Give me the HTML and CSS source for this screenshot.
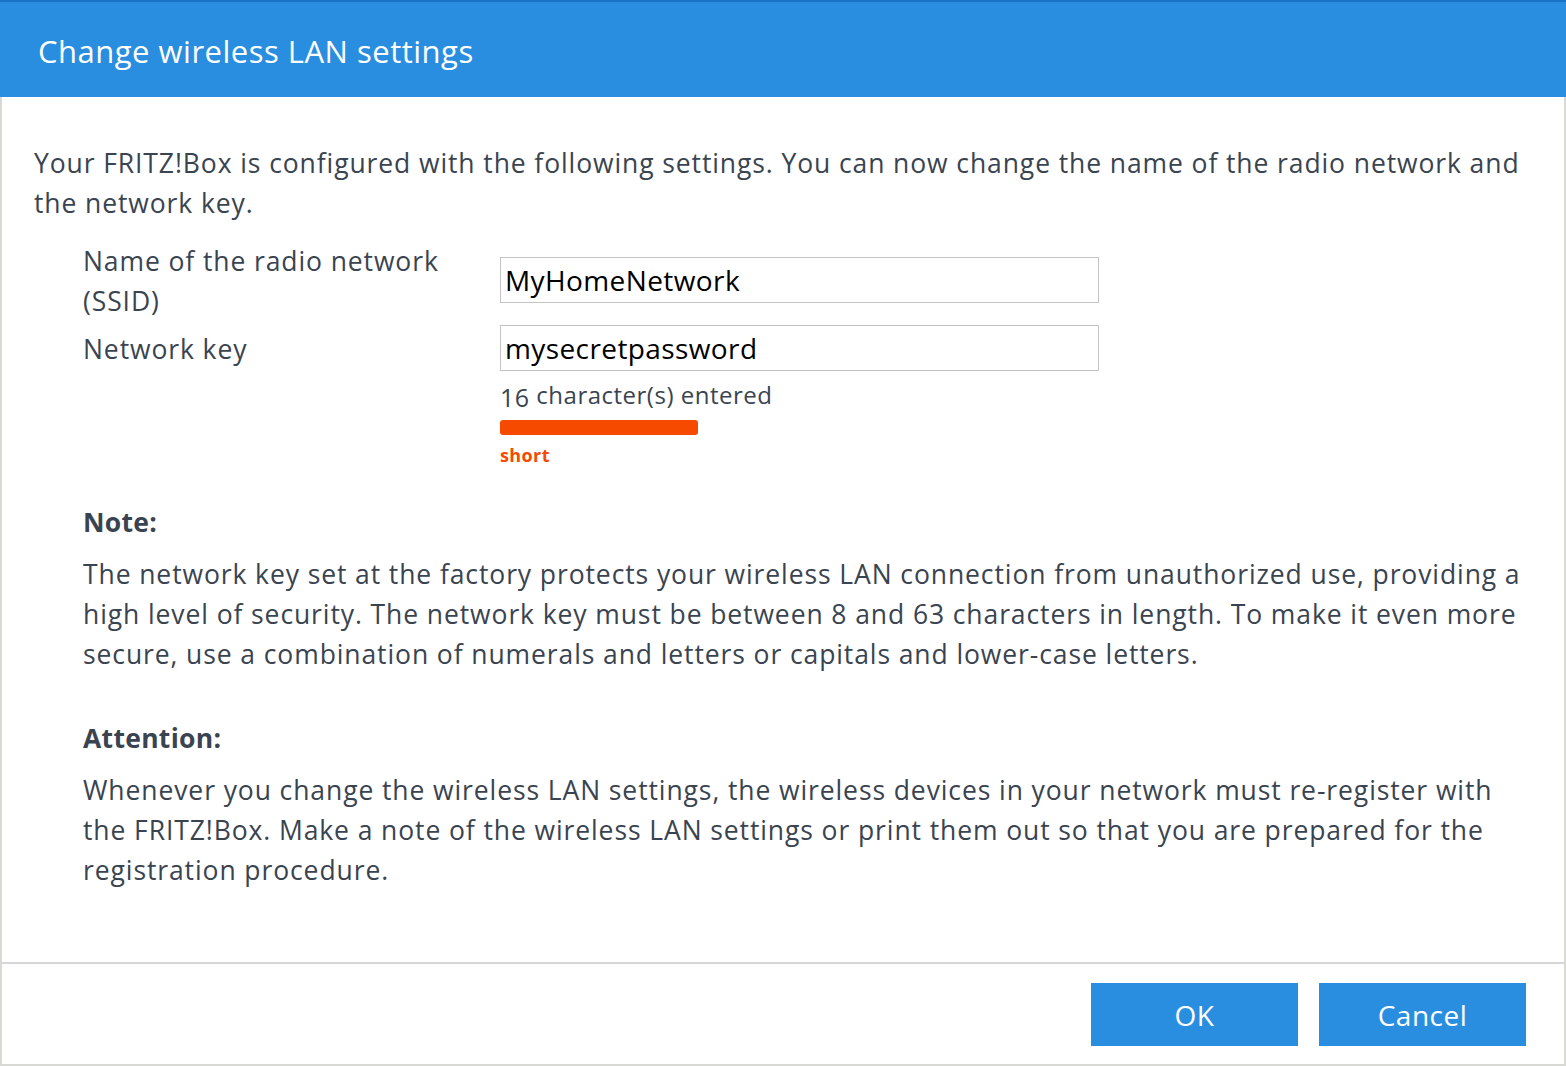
FILE: index.html
```html
<!DOCTYPE html>
<html lang="en">
<head>
<meta charset="utf-8">
<title>Change wireless LAN settings</title>
<link rel="stylesheet" href="styles.css">
</head>
<body>
<div class="dialog">
  <header class="dialog-header">
    <h1 class="dialog-title">Change wireless LAN settings</h1>
  </header>
  <main class="dialog-body">
    <p class="intro">Your FRITZ!Box is configured with the following settings. You can now change the name of the radio network and the network key.</p>
    <div class="form">
      <label class="form-label" for="ssid">Name of the radio network (SSID)</label>
      <div class="form-field first">
        <input class="text-input" id="ssid" type="text" value="MyHomeNetwork">
      </div>
      <label class="form-label second" for="key">Network key</label>
      <div class="form-field">
        <input class="text-input" id="key" type="text" value="mysecretpassword">
        <div class="char-count"><span class="count-num">16</span> character(s) entered</div>
        <div class="strength-bar"></div>
        <div class="strength-label">short</div>
      </div>
    </div>
    <section class="notice">
      <h2 class="notice-title">Note:</h2>
      <p class="notice-text">The network key set at the factory protects your wireless LAN connection from unauthorized use, providing a high level of security. The network key must be between 8 and 63 characters in length. To make it even more secure, use a combination of numerals and letters or capitals and lower-case letters.</p>
    </section>
    <section class="notice attention">
      <h2 class="notice-title">Attention:</h2>
      <p class="notice-text">Whenever you change the wireless LAN settings, the wireless devices in your network must re-register with the FRITZ!Box. Make a note of the wireless LAN settings or print them out so that you are prepared for the registration procedure.</p>
    </section>
  </main>
  <footer class="dialog-footer">
    <button class="btn" type="button">OK</button>
    <button class="btn" type="button">Cancel</button>
  </footer>
</div>
</body>
</html>
```
FILE: styles.css
```css
html, body {
  margin: 0;
  padding: 0;
  height: 100%;
}
body {
  font-family: "Open Sans", "Noto Sans", sans-serif;
  color: #3a4450;
  background: #ffffff;
}
.dialog {
  height: 100vh;
  display: flex;
  flex-direction: column;
  box-sizing: border-box;
}
.dialog-header {
  background: #2a8ee0;
  border-top: 2px solid #1a72c6;
  height: 97px;
  box-sizing: border-box;
  display: flex;
  align-items: center;
  padding-left: 38px;
  flex: none;
}
.dialog-title {
  margin: 0;
  color: #ffffff;
  font-weight: 400;
  font-size: 31px;
  letter-spacing: 0.5px;
  line-height: 40px;
  padding-top: 3px;
}
.dialog-body {
  flex: 1;
  border-left: 2px solid #d8d8d4;
  border-right: 2px solid #d8d8d4;
  padding: 46px 36px 0 32px;
}
.intro {
  margin: 0;
  font-size: 26.5px;
  letter-spacing: 0.9px;
  line-height: 40px;
}
.form {
  display: grid;
  grid-template-columns: 417px 600px;
  margin: 18px 0 0 49px;
  row-gap: 4px;
  font-size: 26.5px;
  letter-spacing: 0.9px;
  line-height: 40px;
}
.form-label {
  display: block;
  padding-right: 40px;
}
.form-label.second {
  padding-top: 4px;
}
.form-field.first {
  padding-top: 16px;
}
.text-input {
  display: block;
  width: 599px;
  height: 46px;
  box-sizing: border-box;
  border: 1px solid #c4c4c4;
  padding: 0 4px;
  margin: 0;
  font-family: "Open Sans", "Noto Sans", sans-serif;
  font-size: 28px;
  letter-spacing: 0.4px;
  color: #000000;
  background: #ffffff;
  outline: none;
}
.char-count {
  margin-top: 4px;
  font-size: 24px;
  letter-spacing: 0.5px;
  line-height: 40px;
}
.count-num {
  font-size: 25px;
  vertical-align: -3px;
}
.strength-bar {
  margin-top: 3px;
  width: 198px;
  height: 15px;
  border-radius: 3px;
  background: #f54a00;
}
.strength-label {
  margin-top: 8px;
  font-size: 18px;
  letter-spacing: 0.4px;
  line-height: 24px;
  font-weight: 700;
  color: #f54a00;
}
.notice {
  margin: 35px 0 0 49px;
}
.notice.attention {
  margin-top: 44px;
}
.notice-title {
  margin: 0;
  font-size: 26.5px;
  letter-spacing: 0.3px;
  line-height: 40px;
  font-weight: 700;
}
.notice-text {
  margin: 12px 0 0 0;
  font-size: 26.5px;
  letter-spacing: 0.9px;
  line-height: 40px;
}
.dialog-footer {
  flex: none;
  border: 2px solid #d8d8d4;
  border-top-color: #d6d6d6;
  display: flex;
  justify-content: flex-end;
  gap: 21px;
  padding: 19px 38px 18px 0;
}
.btn {
  width: 207px;
  height: 63px;
  border: none;
  border-radius: 0;
  background: #2a8ee0;
  color: #ffffff;
  font-family: "Open Sans", "Noto Sans", sans-serif;
  font-size: 28px;
  letter-spacing: 0.5px;
  padding: 0;
  cursor: pointer;
}
```
